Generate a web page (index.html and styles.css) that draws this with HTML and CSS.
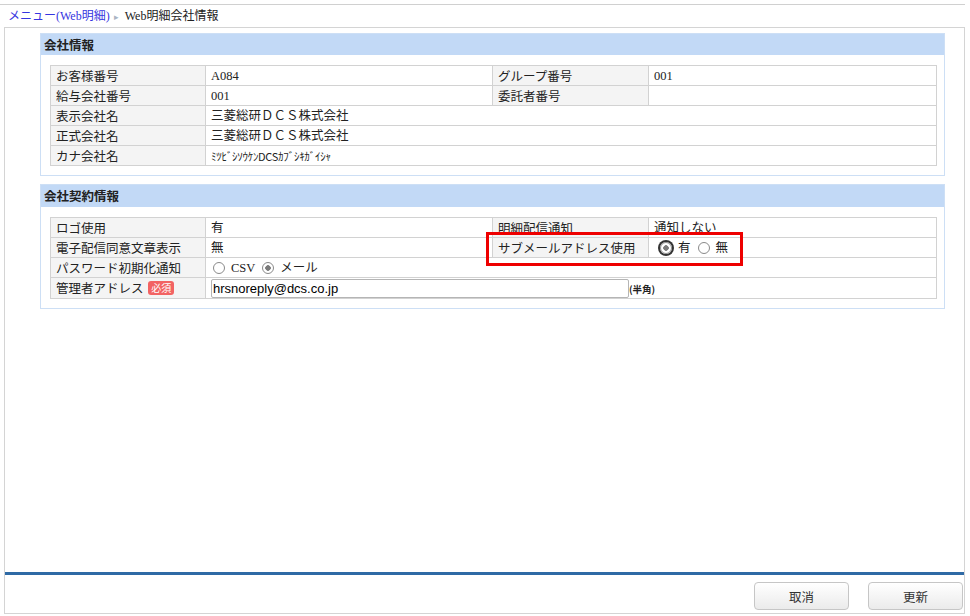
FILE: index.html
```html
<html>
	<head>
		<meta charset="utf-8">
		<title>Web明細会社情報</title>
		<link rel="stylesheet" href="styles.css">
	</head>
	<body>
<div class="crumbs">
	<a href="#">メニュー(Web明細)</a><span class="sep">&#9656;</span><span>Web明細会社情報</span>
</div>

<div class="main">
	<div class="content">

		<div class="panel">
			<h2>会社情報</h2>
			<table class="grid">
				<colgroup>
					<col class="c1"><col class="c2"><col class="c3"><col class="c4">
				</colgroup>
				<tr>
					<th>お客様番号</th><td>A084</td>
					<th>グループ番号</th><td>001</td>
				</tr>
				<tr>
					<th>給与会社番号</th><td>001</td>
					<th>委託者番号</th><td></td>
				</tr>
				<tr><th>表示会社名</th><td colspan="3">三菱総研ＤＣＳ株式会社</td></tr>
				<tr><th>正式会社名</th><td colspan="3">三菱総研ＤＣＳ株式会社</td></tr>
				<tr><th>カナ会社名</th><td colspan="3" class="kana">ﾐﾂﾋﾞｼｿｳｹﾝDCSｶﾌﾞｼｷｶﾞｲｼｬ</td></tr>
			</table>
		</div>

		<div class="panel contract">
			<h2>会社契約情報</h2>
			<table class="grid">
				<colgroup>
					<col class="c1"><col class="c2"><col class="c3"><col class="c4">
				</colgroup>
				<tr>
					<th>ロゴ使用</th><td>有</td>
					<th>明細配信通知</th><td>通知しない</td>
				</tr>
				<tr>
					<th>電子配信同意文章表示</th><td>無</td>
					<th>サブメールアドレス使用</th>
					<td class="choice"><span class="radio on focus"></span>有<span class="radio"></span>無</td>
				</tr>
				<tr>
					<th>パスワード初期化通知</th>
					<td colspan="3" class="choice"><span class="radio first"></span>CSV<span class="radio on"></span>メール</td>
				</tr>
				<tr class="mail">
					<th>管理者アドレス <span class="must">必須</span></th>
					<td colspan="3"><input type="text" class="address" value="hrsnoreply@dcs.co.jp"><span class="hint">(半角)</span></td>
				</tr>
			</table>
			<div class="mark"></div>
		</div>

	</div>
	<div class="footer">
		<button>取消</button>
		<button>更新</button>
	</div>
</div>

	</body>
</html>
```

FILE: styles.css
```css
BODY {
	margin: 0;
	padding-top: 4px;
	background: #fff;
	color: #222;
	font-family: "Liberation Serif", "Noto Sans CJK JP", serif;
	font-size: 12.5px;
	}
.crumbs {
	border-top: 1px solid #d0d0d0;
	height: 22px;
	line-height: 22px;
	margin-right: 5px;
	padding-left: 8px;
	font-size: 12px;
	}
.crumbs A { color: #3535e0; text-decoration: none; }
.crumbs .sep {
	color: #aab4c4;
	font-size: 9px;
	margin: 0 6px 0 4px;
	}

.main {
	border: 1px solid #d4d4d4;
	box-sizing: border-box;
	display: flex;
	flex-direction: column;
	height: 587px;
	margin: 0 5px 0 4px;
	}
.content {
	flex: 1;
	padding: 5px 19px 0 35px;
	}

.panel {
	border: 1px solid #cddff5;
	margin-bottom: 8px;
	position: relative;
	}
.panel H2 {
	background: #c2d9f6;
	font-family: "Noto Sans CJK JP", sans-serif;
	font-size: 12.5px;
	font-weight: bold;
	height: 21px;
	line-height: 21px;
	margin: 0;
	padding-left: 3px;
	}
.contract H2 { height: 22px; line-height: 22px; }

.grid {
	border-collapse: collapse;
	font-size: 12.5px;
	margin: 10px 8px 9px 9px;
	table-layout: fixed;
	width: calc(100% - 17px);
	}
.grid .c1 { width: 155px; }
.grid .c2 { width: 287px; }
.grid .c3 { width: 156px; }
.grid .c4 { width: 288px; }
.grid TH, .grid TD {
	border: 1px solid #d2d2d2;
	box-sizing: border-box;
	height: 20px;
	line-height: 18px;
	padding: 0 5px;
	text-align: left;
	white-space: nowrap;
	}
.grid TH {
	background: #f4f4f4;
	font-family: "Noto Sans CJK JP", sans-serif;
	font-weight: normal;
	}
.grid .kana { font-family: "Noto Sans CJK JP", sans-serif; font-size: 11px; letter-spacing: -0.3px; }
.grid .mail TH, .grid .mail TD { height: 21px; }

.must {
	background: #f26363;
	border-radius: 3px;
	color: #fff;
	display: inline-block;
	font-size: 10px;
	line-height: 14px;
	margin-left: 2px;
	padding: 0 3px;
	vertical-align: 1px;
	}

.choice .radio {
	background: #fff;
	border: 1px solid #8a8a8a;
	border-radius: 50%;
	box-sizing: border-box;
	display: inline-block;
	height: 12px;
	margin: 0 6px 0 7px;
	vertical-align: -2px;
	width: 12px;
	}
.choice .radio.first { margin-left: 2px; }
.choice .radio.on {
	background: radial-gradient(circle, #7a7a7a 0, #7a7a7a 2.5px, #fff 3px);
	}
.choice .radio.focus {
	box-shadow: 0 0 0 2px #333;
	margin-left: 6px;
	}

.address {
	border: 1px solid #b5b5b5;
	border-radius: 2px;
	box-sizing: border-box;
	font-family: "Liberation Sans", Arial, sans-serif;
	font-size: 13px;
	height: 19px;
	padding: 0 1px;
	vertical-align: middle;
	width: 418px;
	}
.hint {
	font-family: "Noto Sans CJK JP", sans-serif;
	font-size: 9.5px;
	font-weight: bold;
	vertical-align: middle;
	}

.mark {
	border: 3px solid #ee0000;
	box-sizing: border-box;
	height: 34px;
	left: 445px;
	position: absolute;
	top: 47px;
	width: 257px;
	}

.footer {
	border-top: 3px solid #2f6aa5;
	display: flex;
	gap: 19px;
	justify-content: flex-end;
	padding: 7px 1px 3px;
	}
.footer BUTTON {
	background: linear-gradient(#ffffff, #ebebeb);
	border: 1px solid #c6c6c6;
	border-radius: 4px;
	color: #333;
	font-family: "Noto Sans CJK JP", sans-serif;
	font-size: 12.5px;
	height: 28px;
	width: 95px;
	}
```
